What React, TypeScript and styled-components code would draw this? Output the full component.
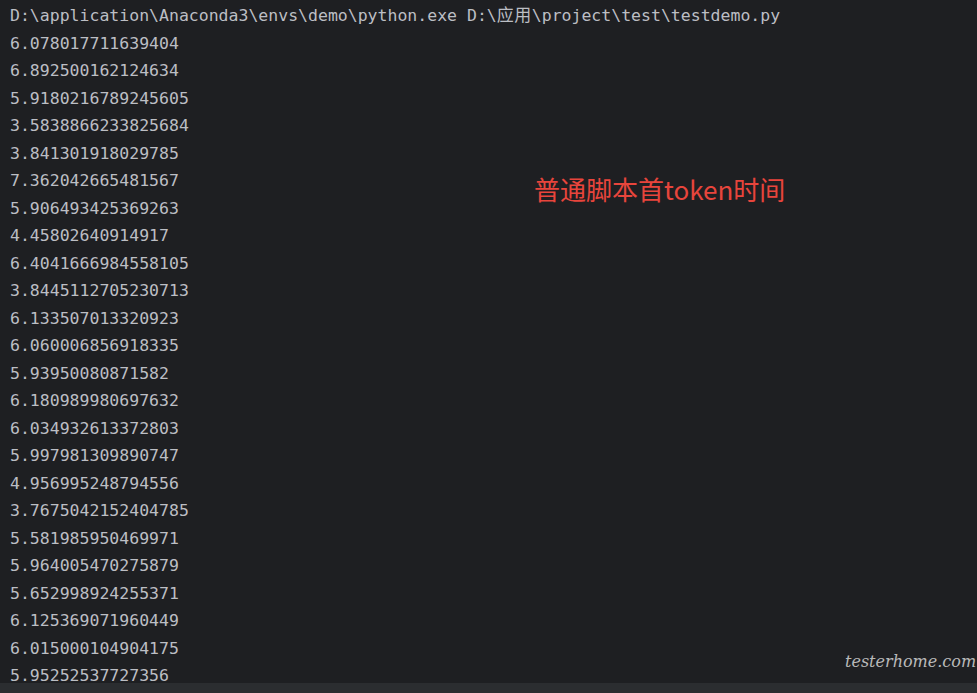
import React from "react";
import styled, { createGlobalStyle } from "styled-components";

const GlobalStyle = createGlobalStyle`
  html, body {
    margin: 0;
    padding: 0;
    background: #1e1f22;
  }
`;

const values = [
  "6.078017711639404",
  "6.892500162124634",
  "5.9180216789245605",
  "3.5838866233825684",
  "3.841301918029785",
  "7.362042665481567",
  "5.906493425369263",
  "4.45802640914917",
  "6.4041666984558105",
  "3.8445112705230713",
  "6.133507013320923",
  "6.060006856918335",
  "5.93950080871582",
  "6.180989980697632",
  "6.034932613372803",
  "5.997981309890747",
  "4.956995248794556",
  "3.7675042152404785",
  "5.581985950469971",
  "5.964005470275879",
  "5.652998924255371",
  "6.125369071960449",
  "6.015000104904175",
  "5.95252537727356",
];

const Screen = styled.div`
  position: relative;
  display: flex;
  flex-direction: column;
  width: 977px;
  height: 693px;
  overflow: hidden;
  background: #1e1f22;
`;

const Console = styled.div`
  flex: 1;
  overflow: hidden;
  padding: 0 0 0 10px;
  font-family: "DejaVu Sans Mono", "Noto Sans CJK SC", monospace;
  font-size: 16.5px;
  line-height: 27.5px;
  color: #bcbec4;
`;

const Line = styled.div`
  white-space: pre;
`;

const Cjk = styled.span`
  font-family: "Noto Sans CJK SC", sans-serif;
  font-size: 17px;
  letter-spacing: 0.5px;
`;

const StatusBar = styled.div`
  height: 10px;
  flex-shrink: 0;
  background: #2b2d30;
`;

const Note = styled.div`
  position: absolute;
  left: 534px;
  top: 173px;
  font-family: "Noto Sans CJK SC", "Noto Sans", sans-serif;
  font-size: 26px;
  line-height: 32px;
  color: #e8453c;
  white-space: nowrap;
`;

const Watermark = styled.div`
  position: absolute;
  left: 845px;
  top: 652px;
  font-family: "DejaVu Serif", serif;
  font-style: italic;
  font-size: 16px;
  line-height: 20px;
  color: #d4d4d4;
  opacity: 0.85;
  white-space: nowrap;
`;

export default function App() {
  return (
    <Screen>
      <GlobalStyle />
      <Console>
        <Line>
          D:\application\Anaconda3\envs\demo\python.exe D:\<Cjk>应用</Cjk>\project\test\testdemo.py
        </Line>
        {values.map((v, i) => (
          <Line key={i}>{v}</Line>
        ))}
      </Console>
      <StatusBar />
      <Note>普通脚本首token时间</Note>
      <Watermark>testerhome.com</Watermark>
    </Screen>
  );
}
